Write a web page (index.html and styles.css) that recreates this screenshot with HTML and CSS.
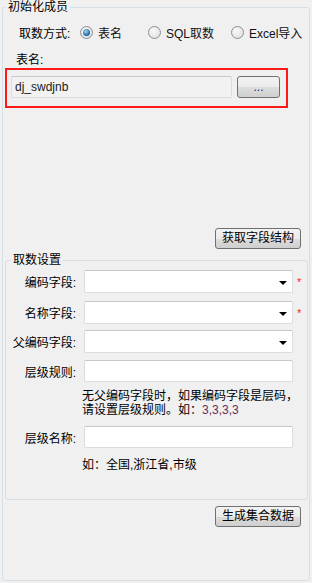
FILE: index.html
```html
<!DOCTYPE html>
<html lang="zh-CN">
<head>
  <meta charset="UTF-8">
  <title>初始化成员</title>
  <link rel="stylesheet" href="styles.css">
</head>
<body>
  <fieldset class="group outer">
    <legend>初始化成员</legend>

    <div class="mode-row">
      <span class="mode-label">取数方式:</span>
      <label class="radio opt1"><span class="dot checked"></span>表名</label>
      <label class="radio opt2"><span class="dot"></span>SQL取数</label>
      <label class="radio"><span class="dot"></span>Excel导入</label>
    </div>

    <div class="table-label">表名:</div>
    <div class="highlight">
      <div class="textbox grey">dj_swdjnb</div>
      <button class="btn dots">...</button>
    </div>

    <div class="btn-row first">
      <button class="btn">获取字段结构</button>
    </div>

    <fieldset class="group inner">
      <legend>取数设置</legend>

      <div class="field r1">
        <span class="flabel">编码字段:</span>
        <div class="textbox combo"><span class="arrow"></span></div>
        <span class="req">*</span>
      </div>
      <div class="field r2">
        <span class="flabel">名称字段:</span>
        <div class="textbox combo"><span class="arrow"></span></div>
        <span class="req">*</span>
      </div>
      <div class="field r3">
        <span class="flabel">父编码字段:</span>
        <div class="textbox combo"><span class="arrow"></span></div>
      </div>
      <div class="field r4">
        <span class="flabel">层级规则:</span>
        <div class="textbox"></div>
      </div>
      <div class="note">无父编码字段时，如果编码字段是层码，<br>请设置层级规则。如：<span class="num">3,3,3,3</span></div>
      <div class="field r5">
        <span class="flabel">层级名称:</span>
        <div class="textbox"></div>
      </div>
      <div class="note hint">如：全国,浙江省,市级</div>
    </fieldset>

    <div class="btn-row last">
      <button class="btn">生成集合数据</button>
    </div>
  </fieldset>
</body>
</html>
```

FILE: styles.css
```css
html, body {
  margin: 0;
  background: #f0f0f0;
}
body {
  padding: 0 2px 0 2px;
  font-family: "Liberation Sans", "Noto Sans CJK SC", sans-serif;
  font-size: 12px;
  color: #000;
}
.group {
  margin: 0;
  padding: 0;
  border: 1px solid #d5dfe5;
  border-radius: 3px;
  min-width: 0;
}
.group legend {
  padding: 0 2px;
  margin-left: 3px;
  line-height: 14px;
}
.outer {
  box-sizing: border-box;
  height: 581px;
}
.outer > legend {
  margin-left: 3px;
}

.mode-row {
  display: flex;
  align-items: center;
  height: 16px;
  margin-top: 10px;
  padding-left: 16px;
}
.mode-label {
  width: 61px;
}
.radio {
  display: flex;
  align-items: center;
  gap: 5px;
  color: #111;
}
.opt1 { width: 68px; }
.opt2 { width: 83px; }
.dot {
  width: 11px;
  height: 11px;
  border-radius: 50%;
  border: 1px solid #8e8f8f;
  background: radial-gradient(circle at 40% 35%, #fbfbfb, #d8d8d8);
  position: relative;
}
.dot.checked::after {
  content: "";
  position: absolute;
  left: 2px;
  top: 2px;
  width: 7px;
  height: 7px;
  border-radius: 50%;
  background: radial-gradient(circle at 40% 35%, #9fd8f8, #1c5f9c 70%);
}

.table-label {
  margin-top: 13px;
  padding-left: 13px;
  line-height: 14px;
}
.highlight {
  display: flex;
  gap: 5px;
  width: 283px;
  box-sizing: border-box;
  margin-top: 1px;
  margin-left: 2px;
  padding: 6px 6px 8px 4px;
  border: 2px solid #ff1a1a;
}
.textbox {
  box-sizing: border-box;
  height: 22px;
  background: #fff;
  border: 1px solid #d9dde2;
  border-top-color: #c4c8cc;
  border-radius: 2px;
  padding-left: 3px;
  line-height: 20px;
  position: relative;
}
.textbox.grey {
  width: 221px;
  background: #f2f2f2;
  color: #1a1a1a;
}

.btn {
  font: inherit;
  color: #000;
  height: 21px;
  padding: 0 6px;
  border: 1px solid #707070;
  border-radius: 3px;
  background: linear-gradient(#f2f2f2 0%, #ebebeb 50%, #dddddd 51%, #cfcfcf 100%);
  line-height: 17px;
}
.btn.dots {
  width: 43px;
  height: 22px;
  color: #2a1a6a;
  line-height: 14px;
}
.btn-row {
  display: flex;
  justify-content: flex-end;
  padding-right: 8px;
}
.btn-row.first {
  margin-top: 120px;
}
.btn-row.last {
  margin-top: 6px;
}

.inner {
  margin: 4px 1px 0 2px;
  height: 247px;
  box-sizing: border-box;
}
.inner > legend {
  margin-left: 5px;
}
.field {
  display: flex;
  align-items: center;
  height: 23px;
}
.flabel {
  width: 70px;
  text-align: right;
  margin-right: 8px;
}
.field .textbox {
  width: 209px;
  height: 23px;
}
.r1 { margin-top: 3px; }
.r2 { margin-top: 8px; }
.r3 { margin-top: 6px; }
.r4 { margin-top: 7px; height: 22px; }
.r4 .textbox, .r5 .textbox { height: 22px; }
.r5 { margin-top: 9px; height: 22px; }
.arrow {
  position: absolute;
  right: 5px;
  top: 10px;
  border-left: 4px solid transparent;
  border-right: 4px solid transparent;
  border-top: 4px solid #000;
}
.req {
  color: #ff2020;
  margin-left: 4px;
  font-size: 11px;
}
.note {
  margin-top: 7px;
  padding-left: 76px;
  line-height: 14px;
}
.note .num {
  color: #6a2c5e;
}
.note.hint {
  margin-top: 10px;
}
```
